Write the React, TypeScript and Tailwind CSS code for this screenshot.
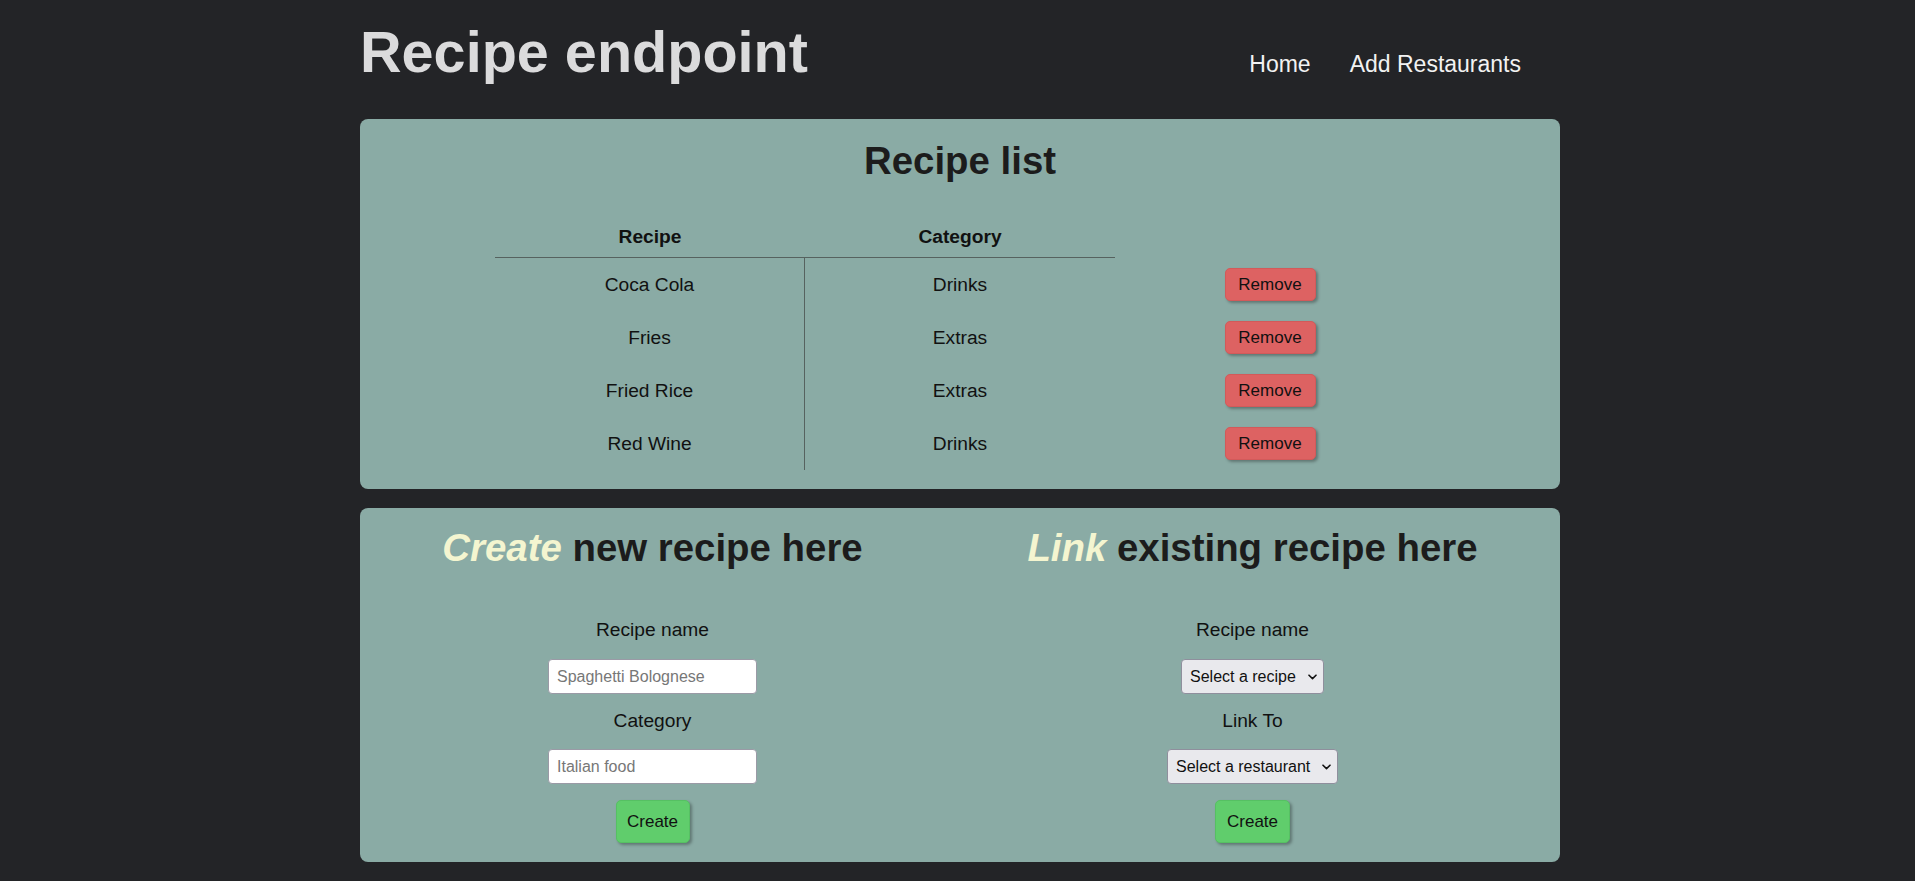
import React from "react";

const recipes = [
  { name: "Coca Cola", category: "Drinks" },
  { name: "Fries", category: "Extras" },
  { name: "Fried Rice", category: "Extras" },
  { name: "Red Wine", category: "Drinks" },
];

function Chevron() {
  return (
    <svg
      className="pointer-events-none absolute right-[7px] top-1/2 -translate-y-1/2"
      width="9"
      height="6"
      viewBox="0 0 9 6"
      fill="none"
    >
      <path d="M1 1.2 L4.5 4.6 L8 1.2" stroke="#111" strokeWidth="1.6" strokeLinecap="round" strokeLinejoin="round" />
    </svg>
  );
}

function Select({ label, width }: { label: string; width: string }) {
  return (
    <div className={`relative ${width}`}>
      <select
        defaultValue=""
        className="h-[35px] w-full appearance-none rounded-[4px] border border-[#8f8f9d] bg-[#e9e9ed] pl-[8px] pr-[24px] text-[16px] leading-[20px] text-[#111]"
      >
        <option value="">{label}</option>
      </select>
      <Chevron />
    </div>
  );
}

export default function App() {
  return (
    <div
      className="min-h-[881px] w-full bg-[#232427] text-[19.2px]"
      style={{ fontFamily: '"Liberation Sans", Arial, sans-serif' }}
    >
      <div className="mx-auto w-[1205px] pl-[5px]">
        {/* Header */}
        <div className="flex h-[119px] items-start justify-between">
          <h1 className="pt-[19px] text-[57.6px] font-bold leading-[66px] text-[#dbdbdc]">
            Recipe endpoint
          </h1>
          <nav className="flex gap-[39px] pr-[39px] pt-[51px] text-[23px] leading-[26px] text-[#f2f2f2]">
            <a href="#">Home</a>
            <a href="#">Add Restaurants</a>
          </nav>
        </div>

        {/* Recipe list card */}
        <div className="rounded-[8px] bg-[#8aaba5] pb-[19px] pt-[20px]">
          <h2 className="text-center text-[38.4px] font-bold leading-[44px] text-[#1c1c1c]">
            Recipe list
          </h2>
          <div className="mx-auto mt-[34px] grid w-[930px] grid-cols-[310px_310px_310px] text-[#111]">
            <div className="flex h-[41px] items-center justify-center border-b border-[#56625f] font-bold leading-[22px]">
              Recipe
            </div>
            <div className="flex h-[41px] items-center justify-center border-b border-[#56625f] font-bold leading-[22px]">
              Category
            </div>
            <div className="h-[41px]" />
            {recipes.map((r) => (
              <React.Fragment key={r.name}>
                <div className="flex h-[53px] items-center justify-center border-r border-[#56625f] leading-[22px]">
                  {r.name}
                </div>
                <div className="flex h-[53px] items-center justify-center leading-[22px]">
                  {r.category}
                </div>
                <div className="flex h-[53px] items-center justify-center">
                  <button className="h-[33px] w-[91px] rounded-[5px] border border-[#d25a5a] bg-[#dd6262] text-[17px] leading-[20px] text-[#111] shadow-[2px_2px_3px_rgba(0,0,0,0.3)]">
                    Remove
                  </button>
                </div>
              </React.Fragment>
            ))}
          </div>
        </div>

        {/* Forms card */}
        <div className="mb-[19px] mt-[19px] grid grid-cols-2 gap-x-[15px] rounded-[8px] bg-[#8aaba5] pb-[19px] pr-[15px] pt-[18px]">
          <div className="flex flex-col items-center">
            <h2 className="text-[38.4px] font-bold leading-[44px] text-[#1c1c1c]">
              <span className="italic text-[#f4f5d0]">Create</span> new recipe here
            </h2>
            <label className="mt-[49px] leading-[22px] text-[#111]">Recipe name</label>
            <input
              placeholder="Spaghetti Bolognese"
              className="mt-[18px] h-[35px] w-[209px] rounded-[4px] border border-[#9a9aa6] bg-white px-[8px] text-[16px] text-[#111] placeholder:text-[#777]"
            />
            <label className="mt-[16px] leading-[22px] text-[#111]">Category</label>
            <input
              placeholder="Italian food"
              className="mt-[17px] h-[35px] w-[209px] rounded-[4px] border border-[#9a9aa6] bg-white px-[8px] text-[16px] text-[#111] placeholder:text-[#777]"
            />
            <button className="mt-[16px] h-[43px] w-[74px] rounded-[5px] border border-[#56c063] bg-[#60cd6c] text-[17px] leading-[20px] text-[#111] shadow-[2px_2px_3px_rgba(0,0,0,0.3)]">
              Create
            </button>
          </div>
          <div className="flex flex-col items-center">
            <h2 className="text-[38.4px] font-bold leading-[44px] text-[#1c1c1c]">
              <span className="italic text-[#f4f5d0]">Link</span> existing recipe here
            </h2>
            <label className="mt-[49px] leading-[22px] text-[#111]">Recipe name</label>
            <div className="mt-[18px]">
              <Select label="Select a recipe" width="w-[143px]" />
            </div>
            <label className="mt-[16px] leading-[22px] text-[#111]">Link To</label>
            <div className="mt-[17px]">
              <Select label="Select a restaurant" width="w-[171px]" />
            </div>
            <button className="mt-[16px] h-[43px] w-[75px] rounded-[5px] border border-[#56c063] bg-[#60cd6c] text-[17px] leading-[20px] text-[#111] shadow-[2px_2px_3px_rgba(0,0,0,0.3)]">
              Create
            </button>
          </div>
        </div>
      </div>
    </div>
  );
}
